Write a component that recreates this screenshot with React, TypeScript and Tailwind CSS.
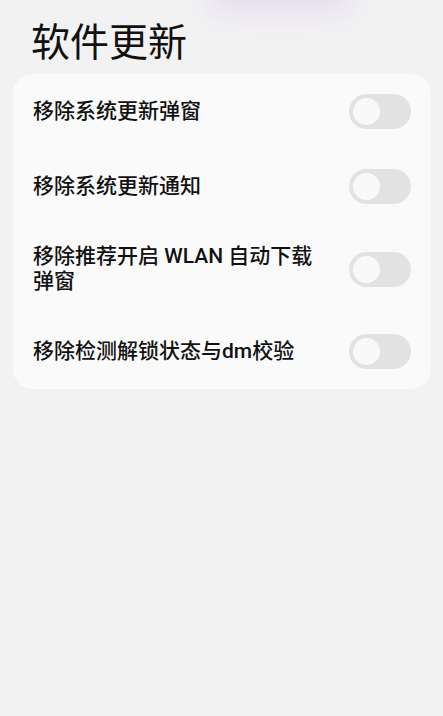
import React from "react";

const items = [
  "移除系统更新弹窗",
  "移除系统更新通知",
  "移除推荐开启 WLAN 自动下载弹窗",
  "移除检测解锁状态与dm校验",
];

function Toggle() {
  return (
    <div className="w-[62px] h-[35px] shrink-0 rounded-full bg-[#e2e2e2] flex items-center pl-[4px]">
      <div className="w-[27px] h-[27px] rounded-full bg-[#f9f9f9]" />
    </div>
  );
}

export default function App() {
  return (
    <div
      className="relative min-h-[716px] w-full overflow-hidden bg-[#f2f2f2]"
      style={{ fontFamily: 'Roboto, "Noto Sans CJK SC", sans-serif' }}
    >
      <div className="absolute left-[205px] top-[-32px] w-[150px] h-[46px] rounded-full bg-[#e6d9ef] blur-[14px] opacity-80" />
      <div className="relative pt-[19px] pl-[31px] text-[39px] leading-[48px] text-[#111111]">
        软件更新
      </div>
      <div className="relative mt-[7px] ml-[13px] mr-[12px] rounded-[20px] bg-[#fafafa]">
        {items.map((t) => (
          <div key={t} className="flex items-center py-[20px] pl-[20px] pr-[20px]">
            <div className="flex-1">
              <div className="max-w-[292px] text-[21px] leading-[25px] font-medium text-[#111111]">
                {t}
              </div>
            </div>
            <Toggle />
          </div>
        ))}
      </div>
    </div>
  );
}
